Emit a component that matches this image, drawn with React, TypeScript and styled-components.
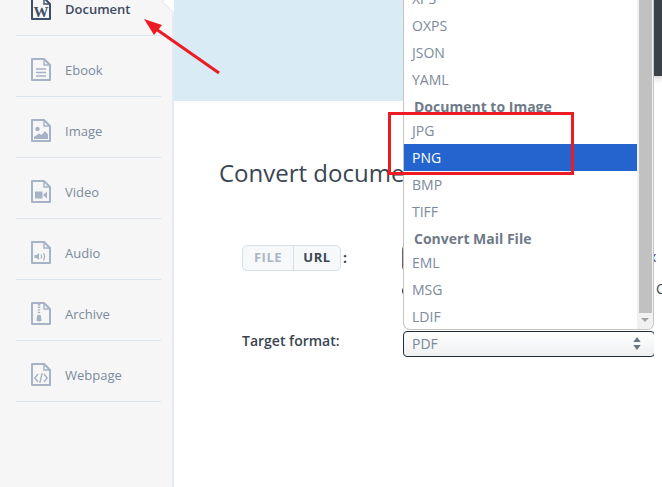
import * as React from "react";
import { FC, ReactNode } from "react";
import styled, { createGlobalStyle } from "styled-components";

const GlobalStyle = createGlobalStyle`
  html, body {
    margin: 0;
    padding: 0;
    height: 100%;
    overflow: hidden;
    background: #fff;
    font-family: "Open Sans", "Liberation Sans", sans-serif;
  }
`;

const FileIcon: FC<{ active?: boolean; children?: ReactNode }> = ({ active, children }) => (
  <IconSvg viewBox="0 0 20 23" $active={active}>
    <path d="M1 1H13L19 7V22H1Z" fill="none" stroke="currentColor" strokeWidth="2" strokeLinejoin="round" />
    <path d="M13 1V7H19" fill="none" stroke="currentColor" strokeWidth="1.4" />
    {children}
  </IconSvg>
);

const navItems: { name: string; active?: boolean; glyph: ReactNode }[] = [
  {
    name: "Document",
    active: true,
    glyph: (
      <text x="10" y="19.5" textAnchor="middle" fontSize="15" fontWeight="700" fontFamily="'Liberation Serif', serif" fill="currentColor">
        W
      </text>
    ),
  },
  {
    name: "Ebook",
    glyph: <path d="M5 11H15M5 14.5H15M5 18H15" stroke="currentColor" strokeWidth="1.5" />,
  },
  {
    name: "Image",
    glyph: (
      <>
        <circle cx="6.5" cy="10" r="2.2" fill="currentColor" />
        <path d="M3 20V18L8 14.5L10.5 16L14 12L17 15.5V20Z" fill="currentColor" />
      </>
    ),
  },
  {
    name: "Video",
    glyph: <path d="M4 11.5H11.5V18.5H4ZM12.5 14.5L16 11.5V18.5L12.5 15.5Z" fill="currentColor" />,
  },
  {
    name: "Audio",
    glyph: (
      <>
        <path d="M3.5 14H5.5L8 12V19L5.5 17H3.5Z" fill="currentColor" />
        <path d="M10 13.5Q11.2 15.5 10 17.5M12.5 12Q14.6 15.5 12.5 19.5" fill="none" stroke="currentColor" strokeWidth="1.2" />
      </>
    ),
  },
  {
    name: "Archive",
    glyph: (
      <>
        <path d="M8 2V12" stroke="currentColor" strokeWidth="2.4" strokeDasharray="1.4 1.2" />
        <path d="M6.3 13H9.7L10.6 18.5Q8 20.5 5.4 18.5Z" fill="currentColor" />
      </>
    ),
  },
  {
    name: "Webpage",
    glyph: (
      <path d="M7 11L3.8 15L7 19M13 11L16.2 15L13 19M11.2 10L8.8 20" fill="none" stroke="currentColor" strokeWidth="1.4" />
    ),
  },
];

type OptionRow = { label: string; group?: boolean; selected?: boolean };

const optionRows: OptionRow[] = [
  { label: "XPS" },
  { label: "OXPS" },
  { label: "JSON" },
  { label: "YAML" },
  { label: "Document to Image", group: true },
  { label: "JPG" },
  { label: "PNG", selected: true },
  { label: "BMP" },
  { label: "TIFF" },
  { label: "Convert Mail File", group: true },
  { label: "EML" },
  { label: "MSG" },
  { label: "LDIF" },
];

export default function App() {
  return (
    <>
      <GlobalStyle />
      <Page>
        <Sidebar>
          {navItems.map((item) => (
            <NavItem key={item.name} $active={item.active}>
              <FileIcon active={item.active}>{item.glyph}</FileIcon>
              <NavLabel $active={item.active}>{item.name}</NavLabel>
              {item.active && <ActiveNotch />}
            </NavItem>
          ))}
        </Sidebar>
        <Main>
          <Hero />
          <Title>Convert document to PNG</Title>
          <Form>
            <SourceRow>
              <SourceLabel>
                <Toggle>
                  <ToggleFile>FILE</ToggleFile>
                  <ToggleUrl>URL</ToggleUrl>
                </Toggle>
                <Colon>:</Colon>
              </SourceLabel>
              <UrlInput />
            </SourceRow>
            <OptionRowLine>
              <RadioMark />
            </OptionRowLine>
            <TargetRow>
              <TargetLabel>Target format:</TargetLabel>
              <SelectBox>
                <span>PDF</span>
                <SortIcon viewBox="0 0 8 14">
                  <path d="M4 0L8 5.5H0ZM4 14L0 8.5H8Z" fill="currentColor" />
                </SortIcon>
              </SelectBox>
            </TargetRow>
          </Form>
          <Dropdown>
            <OptionList>
              {optionRows.map((row) =>
                row.group ? (
                  <GroupLabel key={row.label}>{row.label}</GroupLabel>
                ) : (
                  <Option key={row.label} $selected={row.selected}>
                    {row.label}
                  </Option>
                )
              )}
            </OptionList>
            <ScrollTrack>
              <ScrollThumb />
              <ScrollArrow />
            </ScrollTrack>
          </Dropdown>
        </Main>
        <RightEdge>
          <DarkBar />
          <ClippedX>x</ClippedX>
          <ClippedC>C</ClippedC>
        </RightEdge>
        <RedBox />
        <RedArrow viewBox="0 0 662 487">
          <path d="M219 73L156 29" stroke="#ed1c24" strokeWidth="3" fill="none" />
          <path d="M144 19L162 25L154 35Z" fill="#ed1c24" />
        </RedArrow>
      </Page>
    </>
  );
}

const Page = styled.div`
  position: relative;
  display: flex;
  width: 662px;
  height: 487px;
  overflow: hidden;
  background: #fff;
`;

const Sidebar = styled.nav`
  flex: 0 0 174px;
  box-sizing: border-box;
  width: 174px;
  height: 512px;
  margin-top: -25px;
  padding: 0 11px 0 16px;
  background: #f6f6f6;
  border-right: 2px solid #e6ebf2;
`;

const NavItem = styled.a<{ $active?: boolean }>`
  position: relative;
  display: flex;
  align-items: center;
  gap: 14px;
  box-sizing: border-box;
  height: 61px;
  padding: 7px 0 0 15px;
  border-bottom: 1px solid #dde3ec;
`;

const IconSvg = styled.svg<{ $active?: boolean }>`
  flex: 0 0 20px;
  width: 20px;
  height: 23px;
  color: ${({ $active }) => ($active ? "#3d4f66" : "#a6b2c5")};
`;

const NavLabel = styled.span<{ $active?: boolean }>`
  font-size: 13px;
  font-weight: ${({ $active }) => ($active ? 600 : 400)};
  color: ${({ $active }) => ($active ? "#3d4a5e" : "#7a8aa0")};
`;

const ActiveNotch = styled.i`
  position: absolute;
  right: -21px;
  top: 18px;
  width: 16px;
  height: 16px;
  background: #fff;
  border-left: 1px solid #e3e8ef;
  border-bottom: 1px solid #e3e8ef;
  transform: rotate(45deg);
`;

const Main = styled.main`
  position: relative;
  flex: 0 0 480px;
  width: 480px;
`;

const Hero = styled.div`
  height: 101px;
  background: #d9ebf5;
`;

const Title = styled.h1`
  margin: 54px 0 0 45px;
  font-size: 24px;
  line-height: 36px;
  font-weight: 400;
  color: #3a4552;
  white-space: nowrap;
`;

const Form = styled.div`
  margin: 54px 0 0 68px;
`;

const SourceRow = styled.div`
  display: flex;
  align-items: center;
  height: 26px;
`;

const SourceLabel = styled.div`
  display: flex;
  align-items: center;
  flex: 0 0 160px;
`;

const Toggle = styled.div`
  display: flex;
  box-sizing: border-box;
  height: 26px;
  width: 99px;
  border: 1px solid #d5e0ea;
  border-radius: 5px;
  background: #f7f8fa;
  font-size: 13px;
  font-weight: 700;
  line-height: 23px;
  letter-spacing: 0.5px;
`;

const ToggleFile = styled.span`
  flex: 0 0 50px;
  text-align: center;
  color: #aab6c8;
  border-right: 1px solid #d5e0ea;
`;

const ToggleUrl = styled.span`
  flex: 1;
  text-align: center;
  color: #3a4552;
`;

const Colon = styled.span`
  margin: -2px 0 0 2px;
  font-size: 14px;
  font-weight: 700;
  color: #3a4552;
`;

const UrlInput = styled.div`
  flex: 1;
  height: 26px;
  box-sizing: border-box;
  border: 1px solid #666;
  border-radius: 4px;
`;

const OptionRowLine = styled.div`
  display: flex;
  align-items: center;
  height: 12px;
  margin: 14px 0 0 160px;
`;

const RadioMark = styled.span`
  box-sizing: border-box;
  width: 12px;
  height: 12px;
  border: 1px solid #333;
  border-radius: 50%;
`;

const TargetRow = styled.div`
  display: flex;
  align-items: center;
  margin-top: 34px;
  margin-right: -1px;
`;

const TargetLabel = styled.label`
  flex: 0 0 161px;
  margin-top: -7px;
  font-size: 14px;
  font-weight: 600;
  color: #3a4552;
`;

const SelectBox = styled.div`
  flex: 1;
  display: flex;
  align-items: center;
  justify-content: space-between;
  box-sizing: border-box;
  height: 26px;
  padding: 0 13px 2px 8px;
  border: 1px solid #222d3a;
  border-radius: 4px;
  background: linear-gradient(#fff, #eef0f2);
  font-size: 14px;
  color: #7a8694;
`;

const SortIcon = styled.svg`
  width: 8px;
  height: 13px;
  color: #6a7582;
`;

const Dropdown = styled.div`
  position: absolute;
  left: 229px;
  top: -15px;
  width: 251px;
  height: 345px;
  box-sizing: border-box;
  display: flex;
  background: #fff;
  border: 1px solid #c4c4c4;
  border-top: 0;
  border-radius: 0 0 7px 7px;
  overflow: hidden;
`;

const OptionList = styled.ul`
  flex: 1;
  margin: 0;
  padding: 0;
  list-style: none;
  font-size: 14px;
`;

const Option = styled.li<{ $selected?: boolean }>`
  height: 27px;
  padding-left: 8px;
  line-height: 27px;
  color: ${({ $selected }) => ($selected ? "#fff" : "#7b8a9c")};
  background: ${({ $selected }) => ($selected ? "#2464cf" : "transparent")};
`;

const GroupLabel = styled.li`
  height: 24px;
  padding-left: 10px;
  line-height: 28px;
  font-weight: 700;
  color: #6f7a88;
`;

const ScrollTrack = styled.div`
  flex: 0 0 16px;
  display: flex;
  flex-direction: column;
  align-items: center;
  background: #f1f1f1;
`;

const ScrollThumb = styled.div`
  width: 13px;
  height: 328px;
  background: #c1c1c1;
`;

const ScrollArrow = styled.i`
  margin-top: 5px;
  width: 0;
  height: 0;
  border-left: 4px solid transparent;
  border-right: 4px solid transparent;
  border-top: 4px solid #a3a3a3;
`;

const RightEdge = styled.aside`
  position: relative;
  flex: 1;
  background: #fff;
  overflow: hidden;
`;

const DarkBar = styled.div`
  height: 76px;
  background: #3a4149;
  box-shadow: 0 2px 6px rgba(0, 0, 0, 0.25);
`;

const ClippedX = styled.span`
  position: absolute;
  left: -5px;
  top: 247px;
  font-size: 14px;
  color: #3a4552;
`;

const ClippedC = styled.span`
  position: absolute;
  left: 2px;
  top: 279px;
  font-size: 14px;
  color: #3a4552;
`;

const RedBox = styled.div`
  position: absolute;
  left: 388px;
  top: 112px;
  width: 186px;
  height: 63px;
  box-sizing: border-box;
  border: 3px solid #ed1c24;
`;

const RedArrow = styled.svg`
  position: absolute;
  left: 0;
  top: 0;
  width: 662px;
  height: 487px;
  pointer-events: none;
`;
